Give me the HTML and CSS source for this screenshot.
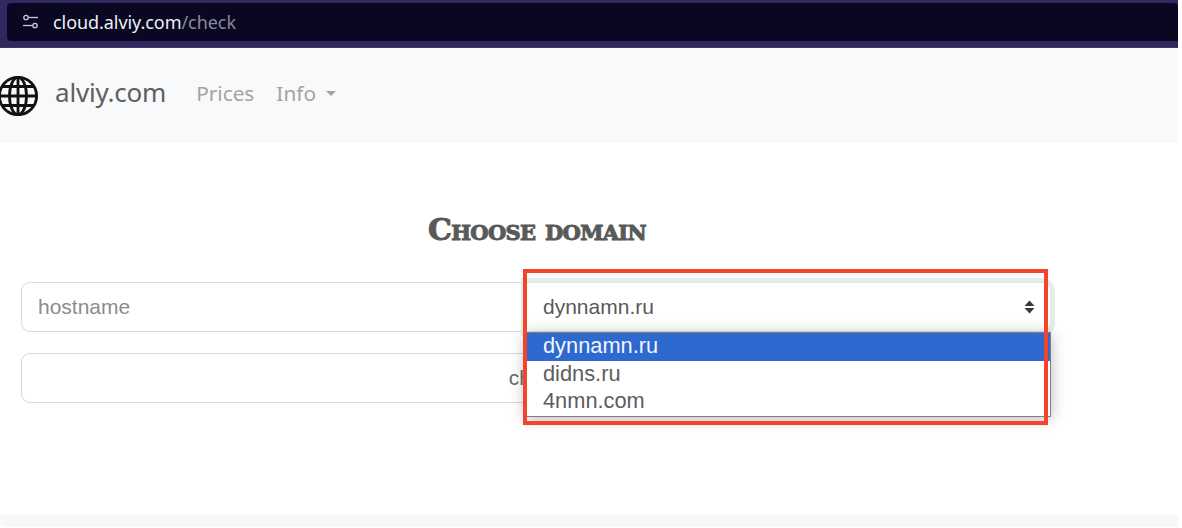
FILE: index.html
```html
<!DOCTYPE html>
<html lang="en">
<head>
<meta charset="utf-8">
<title>alviy.com</title>
<link rel="stylesheet" href="styles.css">
</head>
<body>
<div class="shot">
  <div class="browser">
    <div class="urlbar">
      <svg class="tune" width="18" height="16" viewBox="0 0 18 16" fill="none" stroke="#c9c9d2" stroke-width="1.3">
        <circle cx="4" cy="3.5" r="2.2"/><path d="M6.5 3.5H16"/>
        <circle cx="13" cy="11.5" r="2.2"/><path d="M1 11.5H10.5"/>
      </svg>
      <span class="url">cloud.alviy.com<span class="url-path">/check</span></span>
    </div>
  </div>
  <nav class="navbar">
    <svg class="globe" width="40" height="40" viewBox="0 0 40 40" fill="none" stroke="#111" stroke-width="2.8">
      <circle cx="18" cy="20" r="18.6"/>
      <ellipse cx="18" cy="20" rx="8.5" ry="18.6"/>
      <path d="M18 2V38M0 20H37M2.5 10.5H33.5M2.5 29.5H33.5"/>
    </svg>
    <span class="brand">alviy.com</span>
    <a class="nav-link">Prices</a>
    <a class="nav-link">Info<span class="caret"></span></a>
  </nav>
  <main class="content">
    <h1 class="title">Choose domain</h1>
    <div class="form">
      <div class="row">
        <input class="field" type="text" placeholder="hostname">
        <div class="field select">
          <span>dynnamn.ru</span>
          <svg width="11" height="14" viewBox="0 0 11 14" fill="#343a40"><path d="M5.5 0.5L10.5 6H0.5Z"/><path d="M5.5 13.5L0.5 8H10.5Z"/></svg>
        </div>
      </div>
      <button class="check" type="button">check</button>
      <ul class="dropdown">
        <li class="option active">dynnamn.ru</li>
        <li class="option">didns.ru</li>
        <li class="option">4nmn.com</li>
      </ul>
      <div class="mark"></div>
    </div>
  </main>
  <footer class="foot"></footer>
</div>
</body>
</html>
```
FILE: styles.css
```css
* { box-sizing: border-box; }
html, body { margin: 0; background: #fff; }
body { height: 528px; overflow: hidden; }
.shot { width: 1178px; height: 527px; display: flex; flex-direction: column; }

.browser {
  height: 48px;
  flex: none;
  background: #2f2960;
  padding: 3px 0 7px 7px;
  border-bottom: 1px solid #3b3568;
}
.urlbar {
  height: 38px;
  background: #0a0722;
  border-radius: 4px 4px 0 4px;
  display: flex;
  align-items: center;
  padding-left: 15px;
}
.tune { flex: none; margin-right: 13px; }
.url { font: 18px/1 "Noto Sans", sans-serif; color: #eef0f6; letter-spacing: -0.06px; }
.url-path { color: #8b8b99; }

.navbar {
  height: 95px;
  flex: none;
  background: #f8f9fa;
  display: flex;
  align-items: center;
  padding-bottom: 4px;
}
.globe { flex: none; margin: 4px 15px 0 0; }
.brand { font: 26px/1 "Noto Sans", sans-serif; color: #5f5f5f; margin: 0 30px 4px 0; letter-spacing: -0.2px; }
.nav-link { font: 20.8px/1 "Noto Sans", sans-serif; color: #a3a3a3; margin-right: 22px; display: flex; align-items: center; letter-spacing: 0; }
.caret {
  margin-left: 10px;
  border-top: 5.5px solid #a3a3a3;
  border-left: 5.5px solid transparent;
  border-right: 5.5px solid transparent;
}

.content { flex: 1; display: flex; flex-direction: column; padding-top: 71px; }
.title {
  margin: 0;
  width: 1074px;
  text-align: center;
  font: 900 30px/32px "DejaVu Serif", serif;
  font-variant: small-caps;
  color: #595959;
  letter-spacing: -0.7px;
  -webkit-text-stroke: 1px #595959;
}
.form {
  position: relative;
  width: 1030px;
  margin: 36px 0 0 21px;
  display: flex;
  flex-direction: column;
  gap: 21px;
  font-family: "Liberation Sans", Arial, sans-serif;
}
.row { display: flex; }
.field {
  height: 50px;
  flex: 1 1 0;
  min-width: 0;
  font: 21px "Liberation Sans", Arial, sans-serif;
  color: #5a5a5a;
  border: 1px solid #d6d8e4;
  background: #fff;
  outline: 0;
}
input.field { border-radius: 9px 0 0 9px; padding: 0 16px; border-right: 0; }
input.field::placeholder { color: #8c8c8c; opacity: 1; }
.select {
  border-radius: 0 9px 9px 0;
  border-color: #d8e8e2;
  box-shadow: 0 0 0 4px #e3f0ea;
  display: flex;
  align-items: center;
  justify-content: space-between;
  padding: 0 15px 0 17px;
  flex: none;
  width: 526px;
}
.check {
  height: 50px;
  background: #fff;
  border: 1px solid #d6d8e4;
  border-radius: 9px;
  font: 20.8px "Liberation Sans", Arial, sans-serif;
  color: #6a6a6a;
  padding: 0;
}
.dropdown {
  position: absolute;
  left: 504px;
  top: 50px;
  width: 526px;
  height: 85px;
  margin: 0;
  padding: 0;
  list-style: none;
  background: #fff;
  border: 1px solid #808080;
  box-shadow: 0 2px 14px rgba(0, 0, 0, .28);
  font-size: 21.8px;
  line-height: 25px;
  color: #5d5d5d;
}
.option { padding-left: 17px; height: 27.5px; }
.option.active { background: #2d69cf; color: #f2f6fd; }
.mark {
  position: absolute;
  left: 502px;
  top: -13px;
  width: 525px;
  height: 156px;
  border: 4px solid #f4452a;
}

.foot { height: 12px; margin-top: auto; flex: none; background: #f6f7f9; border-radius: 0 0 0 6px; }
```
